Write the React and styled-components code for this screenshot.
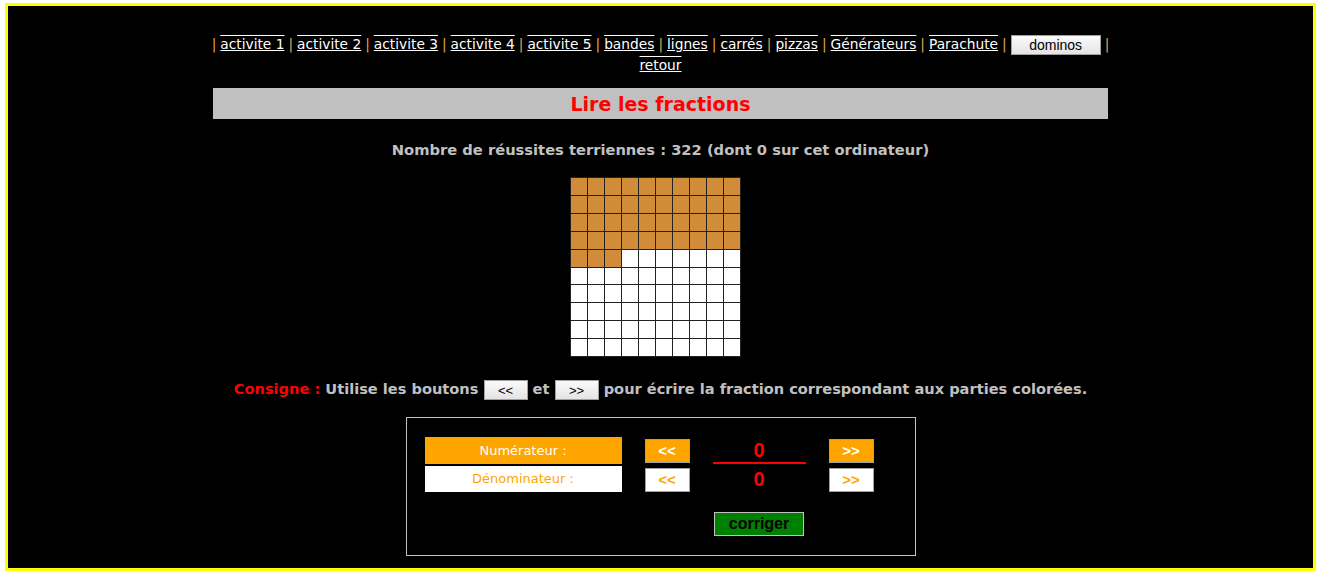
import React from "react";
import styled, { createGlobalStyle } from "styled-components";

const GlobalStyle = createGlobalStyle`
  html, body { margin: 0; padding: 0; background: #ffffff; }
  body { font-family: "DejaVu Sans", "Noto Sans", sans-serif; }
`;

const Frame = styled.div`
  box-sizing: border-box;
  margin: 3px 4px 0 5px;
  height: 568px;
  border: 3px solid #ffff00;
  background: #000000;
  overflow: hidden;
`;

const Content = styled.div`
  width: 895px;
  margin: 0 auto;
  display: flex;
  flex-direction: column;
  align-items: center;
  padding-top: 28px;
`;

const Nav = styled.nav`
  width: 940px;
  height: 42px;
  text-align: center;
  font-size: 13.75px;
  line-height: 21px;
  color: #e0a850;
`;

const NavLine = styled.div`
  height: 21px;
  white-space: nowrap;
`;

const NavLink = styled.a`
  color: #ffffff;
  text-decoration: underline overline;
  cursor: pointer;
`;

const Sep = styled.span`
  color: #e0a850;
  margin: 0 4px;
`;

const GrayButton = styled.button`
  box-sizing: border-box;
  width: ${(p) => p.$w}px;
  height: 20px;
  padding: 0;
  border: 1px solid #a0a0a0;
  background: linear-gradient(#fafafa, #e4e4e4);
  font-family: "Liberation Sans", Arial, sans-serif;
  font-size: ${(p) => p.$fs || 13}px;
  color: #000;
  vertical-align: middle;
`;

const TitleBar = styled.h1`
  box-sizing: border-box;
  width: 895px;
  height: 31px;
  margin: 12px 0 0;
  background: #c0c0c0;
  color: #ff0000;
  font-size: 19px;
  font-weight: bold;
  line-height: 32px;
  text-align: center;
`;

const Stats = styled.p`
  height: 20px;
  margin: 21px 0 0;
  color: #c0c0c0;
  font-size: 14.7px;
  font-weight: bold;
  line-height: 20px;
`;

const Grid = styled.div`
  margin: 17px 10px 0 0;
  display: grid;
  grid-template-columns: repeat(10, 16px);
  grid-template-rows: 17px 17px 17px 17px 17px 16px 17px 17px 17px 17px;
  gap: 1px;
  padding: 1px;
  background: #222;
`;

const Cell = styled.div`
  background: ${(p) => (p.$on ? "#d08c38" : "#ffffff")};
`;

const Consigne = styled.p`
  height: 22px;
  margin: 21px 0 0;
  color: #c0c0c0;
  font-size: 14.6px;
  font-weight: bold;
  line-height: 22px;
  white-space: nowrap;
`;

const Red = styled.span`
  color: #ff0000;
`;

const Panel = styled.div`
  box-sizing: border-box;
  width: 510px;
  height: 139px;
  margin-top: 17px;
  border: 1px solid #c0c0c0;
  padding: 19px 0 0 18px;
  display: grid;
  grid-template-columns: 197px 45px 93px 45px;
  grid-template-rows: 27px 27px 15px 24px;
  column-gap: 23px;
  row-gap: 2px;
  align-items: center;
`;

const Label = styled.div`
  height: ${(p) => p.$h}px;
  align-self: start;
  background: ${(p) => (p.$active ? "#ffa500" : "#ffffff")};
  color: ${(p) => (p.$active ? "#ffffff" : "#ffa500")};
  font-size: 13px;
  line-height: ${(p) => p.$h}px;
  text-align: center;
`;

const StepButton = styled.button`
  box-sizing: border-box;
  width: 45px;
  height: 24px;
  padding: 0;
  border: 1px solid #a0a0a0;
  background: ${(p) => (p.$active ? "#ffa500" : "#ffffff")};
  color: ${(p) => (p.$active ? "#ffffff" : "#ffa500")};
  font-family: "Liberation Sans", Arial, sans-serif;
  font-size: 15px;
  font-weight: bold;
`;

const FracPart = styled.div`
  align-self: stretch;
  box-sizing: border-box;
  border-bottom: ${(p) => (p.$top ? "2px solid #ff0000" : "none")};
  color: #ff0000;
  font-family: "Liberation Sans", Arial, sans-serif;
  font-size: 20px;
  font-weight: bold;
  line-height: ${(p) => (p.$top ? "27px" : "26px")};
  text-align: center;
`;

const Correct = styled.button`
  grid-column: 3;
  grid-row: 4;
  justify-self: center;
  box-sizing: border-box;
  width: 90px;
  height: 24px;
  padding: 0;
  border: 1px solid #c0c0c0;
  background: #008000;
  color: #000;
  font-family: "Liberation Sans", Arial, sans-serif;
  font-size: 16px;
  font-weight: bold;
`;

const links = [
  "activite 1",
  "activite 2",
  "activite 3",
  "activite 4",
  "activite 5",
  "bandes",
  "lignes",
  "carrés",
  "pizzas",
  "Générateurs",
  "Parachute",
];

export default function App() {
  const cells = Array.from({ length: 100 }, (_, i) => i < 43);
  return (
    <>
      <GlobalStyle />
      <Frame>
        <Content>
          <Nav>
            <NavLine>
              <Sep>|</Sep>
              {links.map((l) => (
                <React.Fragment key={l}>
                  <NavLink>{l}</NavLink>
                  <Sep>|</Sep>
                </React.Fragment>
              ))}
              <GrayButton $w={90} $fs={14}>dominos</GrayButton>
              <Sep>|</Sep>
            </NavLine>
            <NavLine>
              <NavLink>retour</NavLink>
            </NavLine>
          </Nav>
          <TitleBar>Lire les fractions</TitleBar>
          <Stats>Nombre de réussites terriennes : 322 (dont 0 sur cet ordinateur)</Stats>
          <Grid>
            {cells.map((on, i) => (
              <Cell key={i} $on={on} />
            ))}
          </Grid>
          <Consigne>
            <Red>Consigne :</Red> Utilise les boutons{" "}
            <GrayButton $w={44}>&lt;&lt;</GrayButton> et{" "}
            <GrayButton $w={44}>&gt;&gt;</GrayButton> pour écrire la fraction
            correspondant aux parties colorées.
          </Consigne>
          <Panel>
            <Label $active $h={27}>Numérateur :</Label>
            <StepButton $active>&lt;&lt;</StepButton>
            <FracPart $top>0</FracPart>
            <StepButton $active>&gt;&gt;</StepButton>
            <Label $h={26}>Dénominateur :</Label>
            <StepButton>&lt;&lt;</StepButton>
            <FracPart>0</FracPart>
            <StepButton>&gt;&gt;</StepButton>
            <Correct>corriger</Correct>
          </Panel>
        </Content>
      </Frame>
    </>
  );
}
